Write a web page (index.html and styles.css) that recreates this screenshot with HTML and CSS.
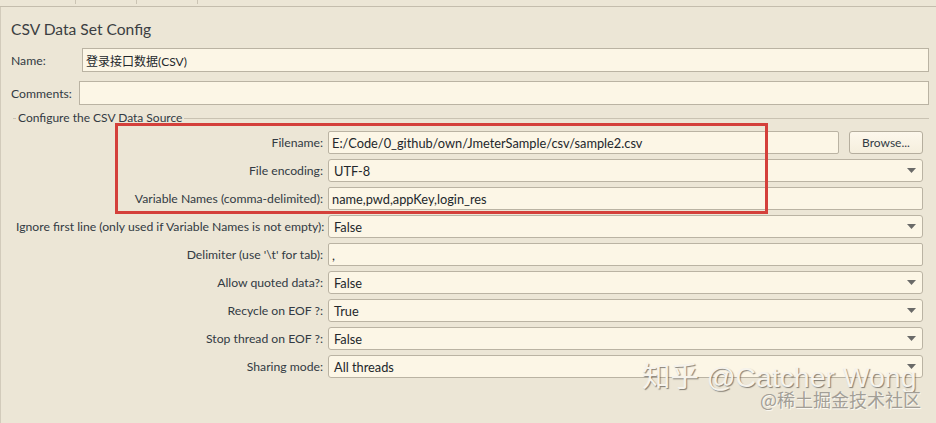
FILE: index.html
```
<!DOCTYPE html>
<html lang="en">
<head>
    <meta charset="UTF-8">
    <meta name="viewport" content="width=device-width, initial-scale=1.0">
    <title>CSV Data Set Config</title>
    <link rel="stylesheet" href="styles.css">
</head>
<body>
    <div class="tabs">
        <div class="tab tab_first"></div>
        <div class="tab"></div>
        <div class="tab"></div>
    </div>

    <div class="panel">
        <h1 class="title">CSV Data Set Config</h1>

        <div class="line">
            <label class="lbl_name">Name:</label>
            <input class="text wide cn" value="登录接口数据(CSV)">
        </div>
        <div class="line">
            <label class="lbl_comments">Comments:</label>
            <input class="text wide" value="">
        </div>

        <fieldset class="source">
            <legend>Configure the CSV Data Source</legend>
            <div class="form">
                <label>Filename:</label>
                <div class="file">
                    <input class="text" value="E:/Code/0_github/own/JmeterSample/csv/sample2.csv">
                    <button class="browse">Browse...</button>
                </div>

                <label>File encoding:</label>
                <div class="select"><span>UTF-8</span><svg width="9" height="5" viewBox="0 0 9 5"><path d="M0 0h9L4.5 5z"/></svg></div>

                <label>Variable Names (comma-delimited):</label>
                <input class="text" value="name,pwd,appKey,login_res">

                <label>Ignore first line (only used if Variable Names is not empty):</label>
                <div class="select"><span>False</span><svg width="9" height="5" viewBox="0 0 9 5"><path d="M0 0h9L4.5 5z"/></svg></div>

                <label>Delimiter (use '\t' for tab):</label>
                <input class="text" value=",">

                <label>Allow quoted data?:</label>
                <div class="select"><span>False</span><svg width="9" height="5" viewBox="0 0 9 5"><path d="M0 0h9L4.5 5z"/></svg></div>

                <label>Recycle on EOF ?:</label>
                <div class="select"><span>True</span><svg width="9" height="5" viewBox="0 0 9 5"><path d="M0 0h9L4.5 5z"/></svg></div>

                <label>Stop thread on EOF ?:</label>
                <div class="select"><span>False</span><svg width="9" height="5" viewBox="0 0 9 5"><path d="M0 0h9L4.5 5z"/></svg></div>

                <label>Sharing mode:</label>
                <div class="select"><span>All threads</span><svg width="9" height="5" viewBox="0 0 9 5"><path d="M0 0h9L4.5 5z"/></svg></div>
            </div>
        </fieldset>
    </div>

    <!-- red highlight drawn over the first three rows -->
    <div class="mark"></div>

    <div class="wm_zhihu">知乎 @Catcher Wong</div>
    <div class="wm_juejin">@稀土掘金技术社区</div>
</body>
</html>
```

FILE: styles.css
```
*{
    box-sizing: border-box;
}

body{
    margin: 0;
    background-color: #ece6d6;
    font-family: Lato, "Noto Sans", "Noto Sans CJK SC", sans-serif;
    font-size: 12.2px;
    color: #323a43;
    overflow: hidden;
}

.tabs{
    display: flex;
    height: 7px;
    border-bottom: 1px solid #c4bdad;
}

.tab{
    width: 61px;
    height: 4px;
    border-right: 1px solid #cbc4b4;
}

.tab_first{
    width: 76px;
}

.panel{
    min-height: 416px;
    border-left: 1px solid #d2cbbb;
    padding: 13px 7px 0 10px;
}

.title{
    margin: 0 0 9px 0;
    font-size: 15.6px;
    line-height: 19px;
    font-weight: normal;
    color: #3b3e42;
}

.line{
    display: flex;
    align-items: center;
    margin-bottom: 9px;
}

.line:nth-of-type(2){
    margin-bottom: 5px;
}

.lbl_name{
    width: 71px;
}

.lbl_comments{
    width: 69px;
    margin-right: -1px;
}

.text{
    height: 23px;
    margin: 0;
    padding: 0 3px;
    border: 1px solid #bab3a3;
    border-radius: 2px;
    background-color: #fcf6e6;
    font-family: Lato, "Noto Sans CJK SC", sans-serif;
    font-size: 12.8px;
    color: #23272b;
    outline: none;
    min-width: 0;
}

.wide{
    flex: 1;
    height: 24px;
    border-radius: 0;
}

.cn{
    font-size: 12px;
    padding-left: 3px;
}

.source{
    margin: 0 0 0 2px;
    padding: 5px 6px 0 3px;
    border: none;
    border-top: 1px solid #c9c2b2;
}

.source legend{
    padding: 0 2px;
    line-height: 16px;
    font-size: 12px;
    color: #323a43;
}

.form{
    display: grid;
    grid-template-columns: 307px 1fr;
    grid-auto-rows: 23px;
    column-gap: 5px;
    row-gap: 5px;
}

.form label{
    text-align: right;
    white-space: nowrap;
    line-height: 23px;
}

.file{
    display: flex;
    gap: 10px;
}

.file .text{
    flex: 1;
}

.browse{
    width: 74px;
    height: 23px;
    margin: 0;
    padding: 0;
    border: 1px solid #b5ae9e;
    border-radius: 3px;
    background: linear-gradient(#fdf8ec, #f5eedd);
    font-family: Lato, sans-serif;
    font-size: 12px;
    color: #323a43;
}

.select{
    display: flex;
    align-items: center;
    justify-content: space-between;
    padding: 0 6px 0 5px;
    border: 1px solid #bab3a3;
    border-radius: 3px;
    background-color: #fcf6e6;
    font-size: 12.8px;
    color: #23272b;
}

.select svg{
    fill: #6a6a68;
}

.mark{
    position: absolute;
    left: 115px;
    top: 123px;
    width: 653px;
    height: 91px;
    border: 3px solid #d4403b;
}

.wm_zhihu{
    position: absolute;
    left: 642px;
    top: 361px;
    font-family: "Liberation Sans", "Noto Sans CJK SC", sans-serif;
    font-size: 28.4px;
    line-height: 32px;
    color: #f6f3ec;
    text-shadow: 1px 1px 1px rgba(60, 55, 50, 0.6);
    white-space: nowrap;
}

.wm_juejin{
    position: absolute;
    left: 760px;
    top: 388px;
    font-family: "Noto Sans CJK SC", sans-serif;
    font-size: 18px;
    line-height: 22px;
    color: #a29e96;
    text-shadow: 1px 1px 0 #fbf8f1;
    white-space: nowrap;
}
```
